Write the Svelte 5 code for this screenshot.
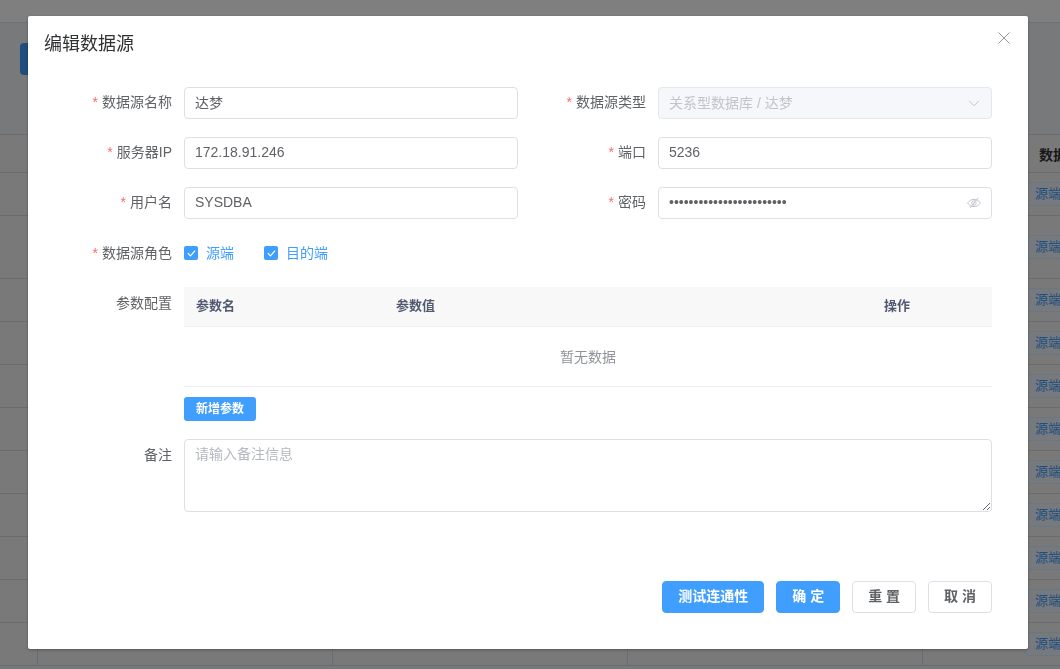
<script lang="ts">
  const bgRows = [43, 63, 43, 43, 43, 43, 43, 43, 43, 43, 43];

  let name = $state('达梦');
  let ip = $state('172.18.91.246');
  let port = $state('5236');
  let user = $state('SYSDBA');
  let password = $state('••••••••••••••••••••••••');
  let remark = $state('');
</script>

<div class="page">
  <div class="topbar"></div>
  <div class="content">
    <div class="toolbar"><span class="add-btn"></span></div>
    <div class="bg-table">
      <div class="bg-head bg-row">
        <span></span><span></span><span></span><span></span><span class="bg-title">数据</span>
      </div>
      {#each bgRows as h}
        <div class="bg-row" style="height: {h}px">
          <span></span><span></span><span></span><span></span>
          <span class="bg-cell"><em class="bg-tag">源端</em></span>
        </div>
      {/each}
    </div>
  </div>
</div>

<div class="mask">
  <div class="dialog">
    <header class="dialog-head">
      <span class="dialog-title">编辑数据源</span>
      <button class="close" aria-label="关闭">
        <svg viewBox="0 0 14 14" width="14" height="14" fill="none" stroke="#909399" stroke-width="1">
          <path d="M1.5 1.5l11 11M12.5 1.5l-11 11" />
        </svg>
      </button>
    </header>

    <form class="form">
      <div class="two">
        <div class="item">
          <span class="label"><i>*</i>数据源名称</span>
          <input class="input" bind:value={name} />
        </div>
        <div class="item">
          <span class="label"><i>*</i>数据源类型</span>
          <div class="affix">
            <input class="input disabled" value="关系型数据库 / 达梦" disabled />
            <svg class="suffix" viewBox="0 0 14 14" width="14" height="14" fill="none" stroke="#c0c4cc" stroke-width="1">
              <path d="M2 4.8l5 5 5-5" />
            </svg>
          </div>
        </div>
        <div class="item">
          <span class="label"><i>*</i>服务器IP</span>
          <input class="input" bind:value={ip} />
        </div>
        <div class="item">
          <span class="label"><i>*</i>端口</span>
          <input class="input" bind:value={port} />
        </div>
        <div class="item">
          <span class="label"><i>*</i>用户名</span>
          <input class="input" bind:value={user} />
        </div>
        <div class="item">
          <span class="label"><i>*</i>密码</span>
          <div class="affix">
            <input class="input" bind:value={password} />
            <svg class="suffix" viewBox="0 0 14 14" width="14" height="14" fill="none" stroke="#c0c4cc" stroke-width="1">
              <path d="M.6 7C2.200 4.600 4.400 3.400 7 3.400s4.800 1.200 6.400 3.600C11.800 9.400 9.600 10.600 7 10.600S2.200 9.400.6 7z" />
              <circle cx="7" cy="7" r="2.200" />
              <path d="M11.200 1.800l-8.400 10.400" />
            </svg>
          </div>
        </div>
      </div>

      <div class="item full">
        <span class="label"><i>*</i>数据源角色</span>
        <div class="checks">
          <span class="check">
            <span class="box">
              <svg viewBox="0 0 14 14" width="14" height="14" fill="none" stroke="#fff" stroke-width="1.200">
                <path d="M3.800 7.200l2.700 2.700 4.500-5.300" />
              </svg>
            </span>源端
          </span>
          <span class="check">
            <span class="box">
              <svg viewBox="0 0 14 14" width="14" height="14" fill="none" stroke="#fff" stroke-width="1.200">
                <path d="M3.800 7.200l2.700 2.700 4.500-5.300" />
              </svg>
            </span>目的端
          </span>
        </div>
      </div>

      <div class="item full">
        <span class="label">参数配置</span>
        <div class="params">
          <div class="ptable">
            <div class="phead">
              <span>参数名</span><span>参数值</span><span>操作</span>
            </div>
            <div class="pempty">暂无数据</div>
          </div>
          <button type="button" class="btn-mini">新增参数</button>
        </div>
      </div>

      <div class="item full">
        <span class="label">备注</span>
        <textarea class="textarea" placeholder="请输入备注信息" bind:value={remark}></textarea>
      </div>
    </form>

    <footer class="foot">
      <button type="button" class="btn primary">测试连通性</button>
      <button type="button" class="btn primary">确 定</button>
      <button type="button" class="btn">重 置</button>
      <button type="button" class="btn">取 消</button>
    </footer>
  </div>
</div>

<style>
  :global(body) {
    margin: 0;
    font-family: "Liberation Sans", "Noto Sans CJK SC", sans-serif;
    overflow: hidden;
  }
  .page {
    height: 669px;
    overflow: hidden;
    background: #f0f2f5;
  }
  .topbar {
    height: 23px;
    background: #fff;
    border-bottom: 1px solid #dcdfe6;
    box-sizing: border-box;
  }
  .content {
    padding: 20px 0 0;
  }
  .toolbar {
    height: 91px;
    padding-left: 20px;
  }
  .add-btn {
    display: block;
    width: 80px;
    height: 32px;
    border-radius: 4px;
    background: #409eff;
  }
  .bg-table {
    background: #f2f2f2;
    border-top: 1px solid #d6d9e0;
    box-sizing: border-box;
  }
  .bg-row {
    display: grid;
    grid-template-columns: 38px 295px 295px 295px 1fr;
    border-bottom: 1px solid #d6d9e0;
    box-sizing: border-box;
  }
  .bg-row > span {
    display: flex;
    align-items: center;
    border-right: 1px solid #d6d9e0;
    box-sizing: border-box;
  }
  .bg-row > span:last-child {
    border-right: 0;
  }
  .bg-head {
    height: 38px;
  }
  .bg-title {
    padding-left: 116px;
    font-size: 14px;
    font-weight: 700;
    color: #303133;
    white-space: nowrap;
  }
  .bg-cell {
    padding-left: 102px;
  }
  .bg-tag {
    font-style: normal;
    font-size: 13px;
    line-height: 22px;
    padding: 0 10px 0 9px;
    color: #409eff;
    background: #ecf5ff;
    border: 1px solid #d9ecff;
    border-radius: 4px;
    white-space: nowrap;
  }

  .mask {
    position: fixed;
    inset: 0;
    background: rgba(0, 0, 0, 0.5);
  }
  .dialog {
    width: 1000px;
    height: 633px;
    margin: 16px 0 0 28px;
    box-sizing: border-box;
    background: #fff;
    border-radius: 2px;
    box-shadow: 0 1px 3px rgba(0, 0, 0, 0.3);
    display: flex;
    flex-direction: column;
    position: relative;
  }
  .dialog-head {
    height: 71px;
    padding: 16px 0 0 16px;
    box-sizing: border-box;
  }
  .dialog-title {
    font-size: 18px;
    line-height: 24px;
    color: #303133;
  }
  .close {
    position: absolute;
    top: 15px;
    right: 17px;
    width: 14px;
    height: 14px;
    padding: 0;
    border: 0;
    background: none;
  }
  .form {
    padding: 0 36px 0 24px;
  }
  .two {
    display: grid;
    grid-template-columns: 466px 466px;
    column-gap: 8px;
    row-gap: 18px;
  }
  .item {
    display: flex;
    align-items: flex-start;
  }
  .full {
    margin-top: 18px;
  }
  .label {
    flex: 0 0 120px;
    padding-right: 12px;
    text-align: right;
    font-size: 14px;
    line-height: 30px;
    height: 32px;
    color: #606266;
  }
  .full .label {
    line-height: 32px;
  }
  .label i {
    font-style: normal;
    color: #f56c6c;
    margin-right: 4px;
  }
  .input {
    display: block;
    width: 100%;
    height: 32px;
    box-sizing: border-box;
    padding: 0 10px 2px;
    border: 1px solid #dcdfe6;
    border-radius: 4px;
    background: #fff;
    font: inherit;
    font-size: 14px;
    color: #606266;
    outline: none;
  }
  .disabled {
    background: #f5f7fa;
    border-color: #e4e7ed;
    color: #c0c4cc;
    -webkit-text-fill-color: #c0c4cc;
    opacity: 1;
  }
  .affix {
    position: relative;
    flex: 1;
  }
  .suffix {
    position: absolute;
    top: 9px;
    right: 11px;
  }
  .checks {
    display: flex;
    gap: 30px;
    height: 32px;
    align-items: center;
  }
  .check {
    display: flex;
    align-items: center;
    font-size: 14px;
    line-height: 18px;
    color: #409eff;
  }
  .box {
    width: 14px;
    height: 14px;
    margin-right: 8px;
    border-radius: 2px;
    background: #409eff;
    display: flex;
  }
  .params {
    flex: 1;
    min-width: 0;
  }
  .phead {
    display: grid;
    grid-template-columns: 200px 1fr 120px;
    height: 40px;
    box-sizing: border-box;
    background: #f8f8f9;
    border-bottom: 1px solid #ebeef5;
    font-size: 13px;
    line-height: 37px;
    font-weight: 700;
    color: #515a6e;
  }
  .phead span {
    padding-left: 12px;
  }
  .pempty {
    height: 60px;
    box-sizing: border-box;
    border-bottom: 1px solid #ebeef5;
    text-align: center;
    font-size: 14px;
    line-height: 60px;
    color: #909399;
  }
  .btn-mini {
    display: block;
    margin-top: 10px;
    width: 72px;
    height: 24px;
    padding: 0 0 4px;
    border: 0;
    border-radius: 3px;
    background: #409eff;
    color: #fff;
    font: inherit;
    font-size: 12px;
    font-weight: 700;
  }
  .textarea {
    flex: 1;
    min-width: 0;
    height: 73px;
    box-sizing: border-box;
    padding: 4px 10px;
    border: 1px solid #dcdfe6;
    border-radius: 4px;
    font: inherit;
    font-size: 14px;
    line-height: 20px;
    color: #606266;
    outline: none;
  }
  .textarea::placeholder {
    color: #b4b8bf;
  }
  .foot {
    margin-top: auto;
    padding: 0 36px 36px 0;
    display: flex;
    justify-content: flex-end;
    gap: 12px;
  }
  .btn {
    height: 32px;
    padding: 0 15px 4px;
    border: 1px solid #dcdfe6;
    border-radius: 4px;
    background: #fff;
    color: #606266;
    font: inherit;
    font-size: 14px;
    font-weight: 700;
    white-space: nowrap;
  }
  .primary {
    border-color: #409eff;
    background: #409eff;
    color: #fff;
  }
</style>
